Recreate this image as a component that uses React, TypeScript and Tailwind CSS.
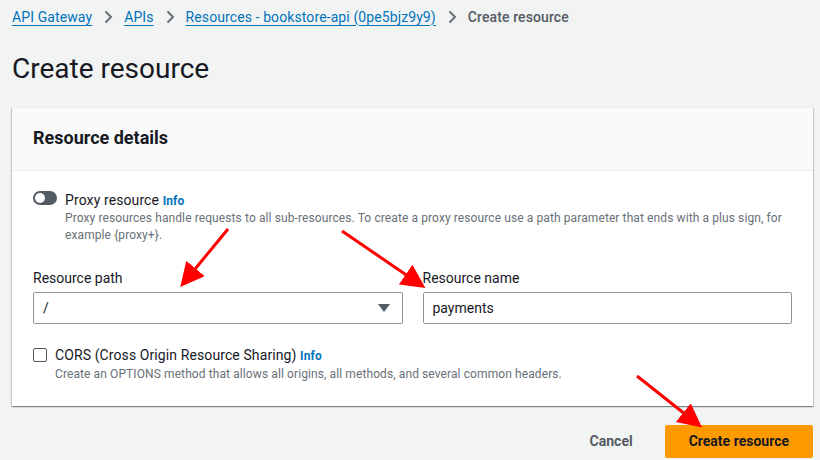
import { useState } from "react";

const Chevron = () => (
  <svg width="10" height="14" viewBox="0 0 10 14" className="mx-[11px] shrink-0">
    <path d="M2.5 1.5 L8 7 L2.5 12.5" fill="none" stroke="#687078" strokeWidth="2" />
  </svg>
);

const proxyHelp =
  "Proxy resources handle requests to all sub-resources. To create a proxy resource use a path parameter that ends with a plus sign, for example {proxy+}.";

const App = () => {
  const [name, setName] = useState("payments");
  const [cors, setCors] = useState(false);
  const [proxy, setProxy] = useState(false);

  return (
    <div
      className="relative min-h-[460px] bg-[#f2f3f3] pl-[12px] pr-[7px] text-[#16191f]"
      style={{ fontFamily: "Roboto, 'Liberation Sans', sans-serif" }}
    >
      {/* Breadcrumbs */}
      <nav className="flex items-center h-[33px] pt-[1px] text-[14px] tracking-[0.1px]">
        <a className="text-[#0073bb] underline underline-offset-[3px]">API Gateway</a>
        <Chevron />
        <a className="text-[#0073bb] underline underline-offset-[3px]">APIs</a>
        <Chevron />
        <a className="text-[#0073bb] underline underline-offset-[3px]">Resources - bookstore-api (0pe5bjz9y9)</a>
        <Chevron />
        <span className="text-[#545b64] font-medium">Create resource</span>
      </nav>

      <h1 className="mt-[18px] text-[28px] leading-[36px] font-normal">Create resource</h1>

      {/* Card */}
      <div className="mt-[20px] bg-white border-t border-[#eaeded] shadow-[0_1px_1px_0_rgba(0,28,36,0.3),1px_1px_1px_0_rgba(0,28,36,0.15),-1px_1px_1px_0_rgba(0,28,36,0.15)]">
        <div className="h-[63px] bg-[#fafafa] border-b border-[#eaeded] flex items-center px-[21px] pb-[3px]">
          <h2 className="text-[18px] font-bold">Resource details</h2>
        </div>

        <div className="px-[21px] pt-[21px] pb-[23px]">
          {/* Proxy toggle */}
          <div className="flex gap-[8px]">
            <button
              onClick={() => setProxy(!proxy)}
              className={`-mt-[1px] w-[24px] h-[14px] rounded-full relative shrink-0 ${proxy ? "bg-[#0073bb]" : "bg-[#545b64]"}`}
            >
              <span className={`absolute top-[2px] w-[10px] h-[10px] rounded-full bg-white ${proxy ? "left-[12px]" : "left-[2px]"}`} />
            </button>
            <div className="tracking-[0.1px]">
              <div className="text-[14px] leading-[16px]">
                Proxy resource <span className="text-[#0073bb] font-bold text-[12px]">Info</span>
              </div>
              <p className="text-[12px] leading-[17px] text-[#687078] mt-[1px]">{proxyHelp}</p>
            </div>
          </div>

          {/* Path + name */}
          <div className="grid grid-cols-2 gap-[20px] mt-[26px]">
            <div>
              <label className="block text-[14px] leading-[16px] mb-[6px]">Resource path</label>
              <div className="h-[32px] border border-[#879596] rounded-[2px] flex items-center justify-between pl-[9px] pr-[12px] text-[14px]">
                <span>/</span>
                <svg width="12" height="8" viewBox="0 0 12 8">
                  <path d="M0 0 H12 L6 8 Z" fill="#545b64" />
                </svg>
              </div>
            </div>
            <div>
              <label className="block text-[14px] leading-[16px] mb-[6px]">Resource name</label>
              <input
                value={name}
                onChange={e => setName(e.target.value)}
                className="w-full h-[32px] border border-[#879596] rounded-[2px] px-[9px] text-[14px] outline-none"
              />
            </div>
          </div>

          {/* CORS */}
          <div className="flex gap-[8px] mt-[23px] tracking-[0.1px]">
            <input
              type="checkbox"
              checked={cors}
              onChange={() => setCors(!cors)}
              className="appearance-none mt-[1px] w-[14px] h-[14px] border border-[#545b64] rounded-[2px] bg-white shrink-0"
            />
            <div>
              <div className="text-[14px] leading-[16px]">
                CORS (Cross Origin Resource Sharing) <span className="text-[#0073bb] font-bold text-[12px]">Info</span>
              </div>
              <p className="text-[12px] leading-[17px] text-[#687078] mt-[2px]">
                Create an OPTIONS method that allows all origins, all methods, and several common headers.
              </p>
            </div>
          </div>
        </div>
      </div>

      {/* Footer */}
      <div className="flex justify-end items-center gap-[20px] mt-[19px]">
        <button className="text-[14px] font-bold text-[#545b64] px-[12px]">Cancel</button>
        <button className="h-[33px] px-[24px] bg-[#ff9900] rounded-[2px] text-[14px] font-bold text-[#16191f]">
          Create resource
        </button>
      </div>

      {/* Annotation arrows */}
      <svg className="absolute inset-0 pointer-events-none" width="820" height="460">
        <defs>
          <marker id="ah" markerWidth="8" markerHeight="8" refX="5" refY="4" orient="auto" markerUnits="strokeWidth">
            <path d="M0 0 L8 4 L0 8 Z" fill="#f00" />
          </marker>
        </defs>
        <line x1="228" y1="229" x2="186" y2="280" stroke="#f00" strokeWidth="3" markerEnd="url(#ah)" />
        <line x1="342" y1="231" x2="418" y2="283" stroke="#f00" strokeWidth="3" markerEnd="url(#ah)" />
        <line x1="637" y1="376" x2="695" y2="422" stroke="#f00" strokeWidth="3" markerEnd="url(#ah)" />
      </svg>
    </div>
  );
};

export default App;
